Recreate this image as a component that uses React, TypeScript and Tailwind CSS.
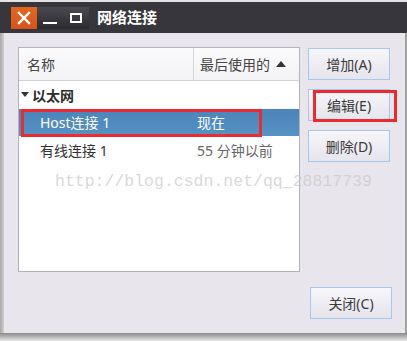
import React from "react";

const F = { fontFamily: '"Noto Sans", "Noto Sans CJK SC", sans-serif' };

function Btn({ label, boxed }: { label: string; boxed?: boolean }) {
  return (
    <div className="relative">
      <div className="w-[82px] h-[32px] flex items-center justify-center border border-[#a4c8ee] bg-gradient-to-b from-[#f7f6fa] to-[#e6e4ec] text-[14px] text-[#3a3a3a]">
        {label}
      </div>
      {boxed && (
        <div className="absolute left-[5px] top-[1px] w-[84px] h-[32px] border-[3px] border-[#ec2a2f]" />
      )}
    </div>
  );
}

export default function App() {
  return (
    <div className="w-[407px] h-[341px] overflow-hidden bg-white flex flex-col" style={F}>
      <div className="h-[2px] bg-[#e4e4e6]" />
      <div className="h-[31px] bg-[#37363c] flex items-center pl-[11px]">
        <div className="flex h-[22px] w-[78px] bg-gradient-to-b from-[#4b4a52] to-[#2a2a2f]">
          <div className="w-[26px] h-[22px] flex items-center justify-center bg-gradient-to-b from-[#e5661c] to-[#d6521d]">
            <svg width="14" height="14" viewBox="0 0 14 14">
              <path d="M2 2 L12 12 M12 2 L2 12" stroke="white" strokeWidth="2.4" strokeLinecap="square" />
            </svg>
          </div>
          <div className="w-[26px] h-[22px] relative">
            <div className="absolute left-[6px] top-[15px] w-[14px] h-[2px] bg-white" />
          </div>
          <div className="w-[26px] h-[22px] relative">
            <div className="absolute left-[7px] top-[6px] w-[12px] h-[10px] border-2 border-white" />
          </div>
        </div>
        <div className="ml-[8px] text-white font-bold text-[15px] leading-none">网络连接</div>
      </div>
      <div className="flex flex-1">
        <div className="w-[4px] bg-gradient-to-r from-[#a8a8a8] to-[#cfcfd2]" />
        <div className="flex-1 bg-[#e8e6ec] flex flex-col pt-[14px] pl-[14px]">
          <div className="flex">
            <div className="w-[282px] h-[225px] bg-white border border-[#b4b2ba] flex flex-col relative text-[14px]">
              <div className="h-[33px] flex bg-gradient-to-b from-[#fbfbfc] to-[#f3f2f5] border-b border-[#d2d0d6] text-[#444]">
                <div className="w-[175px] border-r border-[#d6d4da] flex items-center pl-[8px]">名称</div>
                <div className="flex-1 flex items-center pl-[6px]">
                  最后使用的
                  <svg className="ml-[6px]" width="10" height="6" viewBox="0 0 10 6"><path d="M0 6 L5 0 L10 6Z" fill="#333" /></svg>
                </div>
              </div>
              <div className="h-[28px] flex items-center pl-[2px] font-bold text-[#2c2c2c]">
                <svg width="8" height="6" viewBox="0 0 8 6" className="mr-[3px]"><path d="M0 0 L8 0 L4 5Z" fill="#333" /></svg>
                以太网
              </div>
              <div className="h-[27px] flex items-center bg-gradient-to-b from-[#4a84b8] to-[#5692c4] text-white relative">
                <div className="w-[178px] pl-[21px]">Host连接 1</div>
                <div>现在</div>
                <div className="absolute left-[2px] top-0 w-[241px] h-[28px] border-[3px] border-[#ec2a2f]" />
              </div>
              <div className="h-[28px] flex items-center text-[#333]">
                <div className="w-[178px] pl-[21px]">有线连接 1</div>
                <div className="text-[#666]">55 分钟以前</div>
              </div>
            </div>
            <div className="flex flex-col gap-[9px] ml-[8px] pt-[1px]">
              <Btn label="增加(A)" />
              <Btn label="编辑(E)" boxed />
              <Btn label="删除(D)" />
            </div>
          </div>
          <div className="flex justify-end pr-[13px] mt-[15px]">
            <Btn label="关闭(C)" />
          </div>
          <div className="absolute left-[55px] top-[170px] text-[16.5px] text-[#c8c8c8]/70 tracking-[0px] whitespace-nowrap" style={{ fontFamily: '"Liberation Mono", monospace' }}>
            http://blog.csdn.net/qq_28817739
          </div>
        </div>
        <div className="w-[2px] bg-[#a0a0a0]" />
      </div>
      <div className="h-[8px] bg-gradient-to-b from-[#8a8a8a] to-[#e8e8e8]" />
    </div>
  );
}
